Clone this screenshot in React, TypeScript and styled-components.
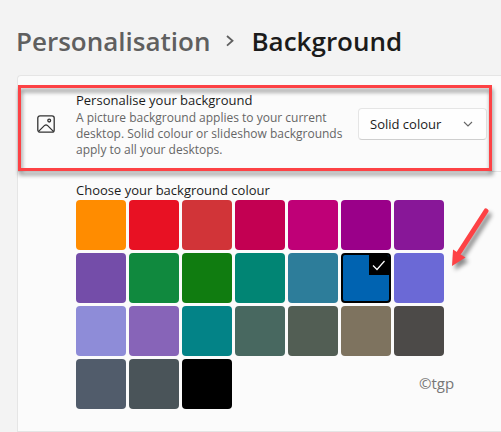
import React, { useState } from "react";
import styled, { createGlobalStyle } from "styled-components";

const GlobalStyle = createGlobalStyle`
  *, *::before, *::after { box-sizing: border-box; }
  body {
    margin: 0;
    background: #f3f3f3;
    color: #1b1b1b;
    font-family: "Open Sans", "Noto Sans", sans-serif;
    font-size: 13px;
    line-height: 20px;
  }
`;

const Page = styled.main`
  padding: 23px 0 0 17px;
  overflow: hidden;
`;

const Breadcrumb = styled.nav`
  display: flex;
  align-items: center;
  height: 36px;
  margin: 0 0 16px -1px;
  font-size: 26px;
  line-height: 36px;
  font-weight: 600;
  white-space: nowrap;
`;

const ParentLink = styled.a`
  color: #5f5f5f;
  text-decoration: none;
`;

const CrumbChevron = styled.svg`
  width: 8px;
  height: 12px;
  margin: 0 17px 0 16px;
  flex: none;
`;

const CurrentPage = styled.h1`
  margin: 0;
  font: inherit;
`;

const Card = styled.section`
  border: 1px solid #e5e5e5;
  border-right: 0;
  border-radius: 4px 0 0 0;
  background: #fbfbfb;
`;

const SettingRow = styled.div`
  position: relative;
  display: flex;
  align-items: center;
  padding: 14px 14px 13px 19px;
  border-bottom: 1px solid #e5e5e5;
`;

const PictureIcon = styled.svg`
  width: 18px;
  height: 18px;
  margin-right: 21px;
  flex: none;
`;

const SettingText = styled.div`
  flex: 1;
  min-width: 0;
  padding-right: 8px;
`;

const SettingTitle = styled.label`
  display: block;
`;

const Description = styled.p`
  margin: 0;
  color: #666;
  font-size: 12px;
  line-height: 16px;
`;

const SelectBox = styled.div`
  position: relative;
  flex: none;
  width: 129px;
`;

const Select = styled.select`
  appearance: none;
  display: block;
  width: 100%;
  height: 32px;
  padding: 0 28px 0 11px;
  border: 1px solid #e5e5e5;
  border-bottom-color: #cfcfcf;
  border-radius: 4px;
  background: #fefefe;
  color: #1b1b1b;
  font: inherit;
`;

const SelectChevron = styled.svg`
  position: absolute;
  top: 13px;
  right: 14px;
  width: 10px;
  height: 6px;
  pointer-events: none;
`;

const Highlight = styled.div`
  position: absolute;
  inset: 9px 9px 0 0;
  border: 3px solid #fd4245;
  filter: drop-shadow(1px 4px 2px rgba(0, 0, 0, 0.45));
  pointer-events: none;
`;

const ColourSection = styled.fieldset`
  position: relative;
  margin: 0;
  padding: 8px 0 22px 58px;
  border: 0;
`;

const Legend = styled.legend`
  float: left;
  width: 100%;
  padding: 0;
`;

const Swatches = styled.div`
  clear: both;
  display: grid;
  grid-template-columns: repeat(7, 50px);
  grid-auto-rows: 50px;
  gap: 3px;
`;

const Swatch = styled.label<{ $colour: string; $selected: boolean }>`
  display: flex;
  justify-content: flex-end;
  border-radius: 4px;
  border: ${(p) => (p.$selected ? "2px solid #000" : "0")};
  background: ${(p) => p.$colour};
  overflow: hidden;
  cursor: pointer;
`;

const SwatchInput = styled.input`
  appearance: none;
  position: absolute;
  width: 1px;
  height: 1px;
  margin: 0;
  opacity: 0;
`;

const Tick = styled.svg`
  width: 20px;
  height: 20px;
  background: #000;
`;

const Credit = styled.span`
  position: absolute;
  left: 401px;
  bottom: 38px;
  color: #777;
  font-size: 15px;
`;

const Arrow = styled.svg`
  position: absolute;
  left: 428px;
  top: 32px;
  width: 52px;
  height: 70px;
  overflow: visible;
  filter: drop-shadow(3px 4px 2px rgba(0, 0, 0, 0.45));
  pointer-events: none;
`;

const colours = [
  ["Yellow gold", "#ff8c00"], ["Red", "#e81123"], ["Pale red", "#d13438"],
  ["Rose", "#c30052"], ["Magenta", "#bf0077"], ["Purple", "#9a0089"],
  ["Violet red", "#881798"], ["Iris", "#744da9"], ["Green", "#10893e"],
  ["Forest", "#107c10"], ["Mint", "#018574"], ["Cool blue", "#2d7d9a"],
  ["Blue", "#0063b1"], ["Pastel violet", "#6b69d6"], ["Lavender", "#8e8cd8"],
  ["Spring violet", "#8764b8"], ["Seafoam", "#038387"], ["Moss", "#486860"],
  ["Liddy green", "#525e54"], ["Camouflage", "#7e735f"], ["Overcast", "#4c4a48"],
  ["Metal blue", "#515c6b"], ["Storm", "#4a5459"], ["Black", "#000000"],
];

export default function App() {
  const [selected, setSelected] = useState("Blue");
  return (
    <>
      <GlobalStyle />
      <Page>
        <Breadcrumb aria-label="Breadcrumb">
          <ParentLink href="#personalisation">Personalisation</ParentLink>
          <CrumbChevron viewBox="0 0 8 12" fill="none" stroke="#5f5f5f" strokeWidth="1.8" aria-hidden="true">
            <path d="M1 1l5.500 4.800L1 10.600" />
          </CrumbChevron>
          <CurrentPage>Background</CurrentPage>
        </Breadcrumb>
        <Card>
          <SettingRow>
            <PictureIcon viewBox="0 0 18 18" fill="none" stroke="#333" strokeWidth="1.3" aria-hidden="true">
              <rect x="0.8" y="0.8" width="16.4" height="16.4" rx="2.2" />
              <circle cx="12.2" cy="5.6" r="1.4" />
              <path d="M1.6 16.4l6-6q1.4-1.2 2.8 0l6 6" />
            </PictureIcon>
            <SettingText>
              <SettingTitle htmlFor="background-type">Personalise your background</SettingTitle>
              <Description>
                A picture background applies to your current desktop. Solid colour or slideshow backgrounds apply to
                all your desktops.
              </Description>
            </SettingText>
            <SelectBox>
              <Select id="background-type" defaultValue="Solid colour">
                <option>Picture</option>
                <option>Solid colour</option>
                <option>Slideshow</option>
              </Select>
              <SelectChevron viewBox="0 0 10 6" fill="none" stroke="#666" strokeWidth="1.1" aria-hidden="true">
                <path d="M1 1l4 4 4-4" />
              </SelectChevron>
            </SelectBox>
            <Highlight />
          </SettingRow>
          <ColourSection>
            <Legend>Choose your background colour</Legend>
            <Swatches>
              {colours.map(([name, value]) => (
                <Swatch key={name} $colour={value} $selected={name === selected}>
                  <SwatchInput
                    type="radio"
                    name="background-colour"
                    aria-label={name}
                    checked={name === selected}
                    onChange={() => setSelected(name)}
                  />
                  {name === selected && (
                    <Tick viewBox="0 0 20 20" fill="none" stroke="#fff" strokeWidth="1.2" aria-hidden="true">
                      <path d="M4 10.5l4 4 7.5-8.5" />
                    </Tick>
                  )}
                </Swatch>
              ))}
            </Swatches>
            <Credit>©tgp</Credit>
            <Arrow viewBox="0 0 52 70" aria-hidden="true">
              <path d="M40 7L13.500 48" stroke="#fd4245" strokeWidth="5" strokeLinecap="round" />
              <path d="M6 62L7 45.500L19.500 53.500Z" fill="#fd4245" />
            </Arrow>
          </ColourSection>
        </Card>
      </Page>
    </>
  );
}
